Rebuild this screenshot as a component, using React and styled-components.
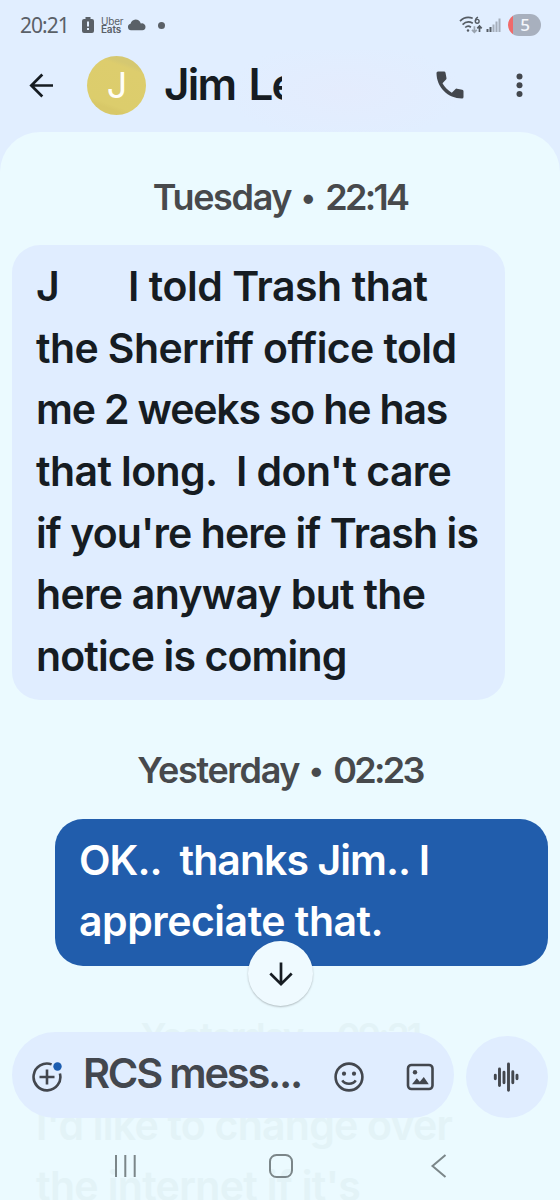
import React from "react";
import styled, { createGlobalStyle } from "styled-components";

const GlobalStyle = createGlobalStyle`
    * {
        box-sizing: border-box;
    }
    body {
        margin: 0;
        background: #ebfaff;
    }
    svg {
        display: block;
        flex: 0 0 auto;
    }
`

const Phone = styled.div`
    width: 560px;
    height: 1200px;
    position: relative;
    overflow: hidden;
    display: flex;
    flex-direction: column;
    background: #e1eeff;
    font-family: Inter, "Liberation Sans", sans-serif;
    color: #161c22;
`

const StatusBar = styled.div`
    height: 50px;
    padding: 0 19px 0 20px;
    display: flex;
    align-items: center;
    color: #5a6067;
`
const Clock = styled.div`
    width: 61px;
    font-family: "Noto Sans", sans-serif;
    font-size: 21px;
    line-height: 48px;
    letter-spacing: -1px;
    padding-bottom: 1px;
`
const UberEats = styled.div`
    width: 26px;
    margin-left: 6px;
    font-size: 10px;
    line-height: 8.5px;
    letter-spacing: -0.2px;
`
const Eats = styled.div`
    font-weight: 600;
`
const Dot = styled.div`
    width: 7px;
    height: 7px;
    margin-left: 12px;
    border-radius: 50%;
    background: #5a6067;
`
const StatusRight = styled.div`
    margin-left: auto;
    display: flex;
    align-items: center;
    gap: 2px;
`
const Battery = styled.div`
    width: 33px;
    height: 22px;
    margin-left: 5px;
    border-radius: 11px;
    background: linear-gradient(to right, #f06a6a 5.5px, #a8b0be 5.5px);
    color: #f4f7fc;
    font-family: "Noto Sans", sans-serif;
    font-size: 17px;
    font-weight: 500;
    line-height: 21px;
    text-align: center;
    padding-left: 1px;
`

const Header = styled.div`
    height: 82px;
    padding: 0 24px 12px 25px;
    display: flex;
    align-items: center;
    background: radial-gradient(ellipse 120px 50px at 345px 42px, #e4ecfd, rgba(225, 238, 255, 0));
`
const Avatar = styled.div`
    width: 59px;
    height: 59px;
    margin-left: 30px;
    border-radius: 50%;
    background: linear-gradient(200deg, #d5c871 18%, #ddcd6d 24%, #dccd6c 76%, #d8c868 82%);
    color: #fffef8;
    font-size: 36px;
    line-height: 58px;
    text-align: center;
    padding-left: 1px;
`
const Name = styled.div`
    width: 118px;
    margin-left: 18px;
    padding-bottom: 2px;
    overflow: hidden;
    white-space: nowrap;
    font-size: 44px;
    font-weight: 600;
    line-height: 68px;
    letter-spacing: -1.7px;
    word-spacing: 3.5px;
`
const HeaderActions = styled.div`
    margin-left: auto;
    display: flex;
    align-items: center;
    gap: 36.5px;
`

const Chat = styled.div`
    flex: 1;
    overflow: hidden;
    display: flex;
    flex-direction: column;
    background: #ebfaff;
    border-radius: 40px 40px 0 0;
`
const DateRow = styled.div`
    flex: 0 0 auto;
    height: ${(props) => props.$height}px;
    padding-top: ${(props) => props.$top}px;
    display: flex;
    align-items: center;
    justify-content: center;
    font-size: 36px;
    font-weight: 600;
    color: ${(props) => (props.$faded ? "#e3f3f7" : "#47494c")};
`
const Day = styled.span`
    letter-spacing: -1.35px;
`
const Bullet = styled.span`
    width: 34px;
    text-align: center;
    font-size: 30px;
`
const Time = styled.span`
    letter-spacing: -2.7px;
`
const Bubble = styled.div`
    flex: 0 0 auto;
    width: 493px;
    margin: 0 12px;
    padding: 11px 0 12.5px 24px;
    border-radius: 28px;
    align-self: ${(props) => (props.$sent ? "flex-end" : "flex-start")};
    background: ${(props) => (props.$faded ? "transparent" : props.$sent ? "#215dac" : "#e0edff")};
    color: ${(props) => (props.$faded ? "#e3f3f7" : props.$sent ? "#ffffff" : "#161c22")};
`
const Line = styled.div`
    display: flex;
    white-space: pre;
    font-size: 41px;
    font-weight: 600;
    line-height: 61.67px;
    letter-spacing: ${(props) => props.$spacing}px;
`
const Hidden = styled.span`
    width: 92px;
`

const ScrollDown = styled.button`
    position: absolute;
    left: 248px;
    top: 941px;
    width: 65px;
    height: 65px;
    padding: 0;
    border: none;
    border-radius: 50%;
    display: flex;
    align-items: center;
    justify-content: center;
    background: #effaff;
    color: #161c22;
    box-shadow: 0 1px 2px rgba(0, 0, 0, 0.25);
`

const Footer = styled.div`
    position: absolute;
    left: 0;
    right: 0;
    bottom: 0;
    height: 168px;
    display: flex;
    flex-direction: column;
`
const Composer = styled.div`
    height: 86px;
    padding: 0 12px;
    display: flex;
    align-items: flex-end;
    justify-content: space-between;
    color: #43474e;
`
const InputPill = styled.div`
    width: 442px;
    height: 86px;
    padding: 4px 18.5px 0 19px;
    border-radius: 43px;
    display: flex;
    align-items: center;
    background: #e0edff;
`
const Placeholder = styled.div`
    width: 270px;
    padding: 0 0 8px 20px;
    white-space: nowrap;
    font-size: 41.5px;
    font-weight: 600;
    line-height: 60px;
    letter-spacing: -2.2px;
`
const VoiceButton = styled.div`
    width: 82px;
    height: 82px;
    border-radius: 50%;
    display: flex;
    align-items: center;
    justify-content: center;
    background: #e0edff;
`
const NavBar = styled.div`
    flex: 1;
    padding: 14px 109px 0 111px;
    display: flex;
    align-items: center;
    justify-content: space-between;
    color: #7b8689;
`

const received = [
    { text: "the Sherriff office told", spacing: -0.6 },
    { text: "me 2 weeks so he has", spacing: -1.17 },
    { text: "that long.  I don't care", spacing: -0.6 },
    { text: "if you're here if Trash is", spacing: -0.9 },
    { text: "here anyway but the", spacing: -0.69 },
    { text: "notice is coming", spacing: -0.88 },
]
const sent = [
    { text: "OK..  thanks Jim.. I", spacing: -0.95 },
    { text: "appreciate that.", spacing: -0.48 },
]
const next = [
    { text: "I'd like to change over", spacing: -0.76 },
    { text: "the internet if it's", spacing: -0.65 },
]

function Lines({ data }) {
    return data.map((line) => (
        <Line key={line.text} $spacing={line.spacing}>{line.text}</Line>
    ))
}

function DateLabel({ day, time, height, top, faded }) {
    return (
        <DateRow $height={height} $top={top} $faded={faded}>
            <Day>{day}</Day>
            <Bullet>•</Bullet>
            <Time>{time}</Time>
        </DateRow>
    )
}

export default function App() {
    return (
        <Phone>
            <GlobalStyle />

            <StatusBar>
                <Clock>20:21</Clock>
                <svg width="14" height="18" viewBox="0 0 14 18">
                    <path fill="currentColor" d="M4.500 1h5v2H11a2 2 0 0 1 2 2v10a2 2 0 0 1-2 2H3a2 2 0 0 1-2-2V5a2 2 0 0 1 2-2h1.500z" />
                    <path stroke="#e1eeff" strokeWidth="2" d="M7 5.400v5M7 12v2" />
                </svg>
                <UberEats>
                    Uber
                    <Eats>Eats</Eats>
                </UberEats>
                <svg width="19" height="12" viewBox="0 0 19 12">
                    <path fill="currentColor" d="M4 11.200a3.300 3.300 0 0 1-.5-6.500A6 6 0 0 1 8.500.6 6 6 0 0 1 13.800 4.600a3.400 3.400 0 0 1 4.700 3.200 3.300 3.300 0 0 1-3.200 3.400z" />
                </svg>
                <Dot />
                <StatusRight>
                    <svg width="24" height="18" viewBox="0 0 24 18" fill="none" stroke="#555c64" strokeWidth="1.700">
                        <path d="M1 5.200C4.400 1.700 9.500.8 13.700 2.300M3.600 8.600c2.600-2.600 6.700-3.300 10.200-1.400M6.200 11.500c1.500-1.400 4-1.600 5.700-.3" />
                        <circle cx="9" cy="14.500" r="1.200" fill="#555c64" stroke="none" />
                        <path strokeWidth="1.400" d="M19 1.200c-1.600.6-2.600 2-2.600 4" />
                        <circle cx="18.200" cy="5.300" r="1.900" strokeWidth="1.400" />
                        <path stroke="#9aa4b0" d="M15.400 10.200v6M13 13.800l2.400 2.500 2.400-2.500" />
                        <path d="M20.500 16v-5.500M18.300 12.400l2.200-2.300 2.200 2.300" />
                    </svg>
                    <svg width="16" height="16" viewBox="0 0 16 16" strokeWidth="2" fill="none">
                        <path stroke="#555c64" d="M2.500 12v3M5.500 10v5" />
                        <path stroke="#a5aebb" d="M8.500 7.500v7.500M11.500 4.500v10.500M14.500 1.500v13.500" />
                    </svg>
                    <Battery>5</Battery>
                </StatusRight>
            </StatusBar>

            <Header>
                <svg width="32" height="32" viewBox="0 0 32 32" fill="none" stroke="#161c22" strokeWidth="2.700">
                    <path d="M28 16.500H7M17.300 5.500L6.300 16.500l11 11" />
                </svg>
                <Avatar>J</Avatar>
                <Name>Jim Le</Name>
                <HeaderActions>
                    <svg width="36" height="36" viewBox="0 0 24 24" fill="#43474d">
                        <path d="M3 4a1 1 0 0 1 1-1h4a1 1 0 0 1 1 .8l.65 3.500a1.200 1.200 0 0 1-.3 1.100L7 10.900a16 16 0 0 0 2.600 3.500 16 16 0 0 0 3.600 2.700l2.350-2.350a1.200 1.200 0 0 1 1.100-.32l3.500.7a1 1 0 0 1 .85 1V20a1 1 0 0 1-1 1C10.600 21 3 13.400 3 4z" />
                    </svg>
                    <svg width="32" height="32" viewBox="0 0 32 32" fill="#43474d">
                        <circle cx="15.500" cy="7.500" r="3" />
                        <circle cx="15.500" cy="16.300" r="3" />
                        <circle cx="15.500" cy="25.100" r="3" />
                    </svg>
                </HeaderActions>
            </Header>

            <Chat>
                <DateLabel day="Tuesday" time="22:14" height={113} top={16} />
                <Bubble>
                    <Line $spacing={-0.45}>
                        <Hidden>J</Hidden>
                        I told Trash that
                    </Line>
                    <Lines data={received} />
                </Bubble>
                <DateLabel day="Yesterday" time="02:23" height={118.5} top={22} />
                <Bubble $sent>
                    <Lines data={sent} />
                </Bubble>
                <DateLabel day="Yesterday" time="09:21" height={118} top={22} faded />
                <Bubble $faded>
                    <Lines data={next} />
                </Bubble>
            </Chat>

            <ScrollDown>
                <svg width="32" height="32" viewBox="0 0 32 32" fill="none" stroke="currentColor" strokeWidth="2.700">
                    <path d="M16 4.500v21M5.300 15.500L16 26.200l10.700-10.700" />
                </svg>
            </ScrollDown>

            <Footer>
                <Composer>
                    <InputPill>
                        <svg width="32" height="32" viewBox="0 0 32 32" fill="none" stroke="currentColor" strokeWidth="2.600">
                            <path d="M20.600 3.400A13.400 13.400 0 1 0 28.900 12.500M16 8.500v15M8.500 16h15" />
                            <circle cx="26.500" cy="5.500" r="4.200" fill="#1c5db0" stroke="none" />
                        </svg>
                        <Placeholder>RCS mess...</Placeholder>
                        <svg width="32" height="32" viewBox="0 0 32 32" fill="none" stroke="currentColor" strokeWidth="2.600">
                            <circle cx="16" cy="16" r="13.400" />
                            <path d="M9.300 19.300c2.600 4.600 10.800 4.600 13.400 0" />
                            <circle cx="11" cy="12.700" r="2.100" fill="currentColor" stroke="none" />
                            <circle cx="21" cy="12.700" r="2.100" fill="currentColor" stroke="none" />
                        </svg>
                        <svg width="32" height="32" viewBox="0 0 32 32" style={{ marginLeft: "auto" }}>
                            <rect x="4" y="4" width="24.500" height="24" rx="3.500" fill="none" stroke="currentColor" strokeWidth="2.600" />
                            <circle cx="11" cy="11.200" r="2.200" fill="currentColor" />
                            <path fill="currentColor" d="M8 23.300l4.800-6 3 3.400 4-4.600 5 7.200z" />
                        </svg>
                    </InputPill>
                    <VoiceButton>
                        <svg width="32" height="32" viewBox="0 0 32 32" stroke="currentColor" strokeWidth="2.900" strokeLinecap="round">
                            <path d="M4.300 14.300v3.400M8.500 8v16.500M13 11.300v10.500M17.500 3v26.300M21.800 10.800v11M26 14.300v3.400" />
                        </svg>
                    </VoiceButton>
                </Composer>
                <NavBar>
                    <svg width="28" height="24" viewBox="0 0 28 24" fill="none" stroke="currentColor" strokeWidth="2">
                        <path d="M5 1v22M14.300 1v22M23.700 1v22" />
                    </svg>
                    <svg width="28" height="24" viewBox="0 0 28 24" fill="none" stroke="currentColor" strokeWidth="2">
                        <rect x="3" y="1" width="22" height="22" rx="6.500" />
                    </svg>
                    <svg width="28" height="24" viewBox="0 0 28 24" fill="none" stroke="currentColor" strokeWidth="2">
                        <path d="M22.500 1L9.500 12l13 11" />
                    </svg>
                </NavBar>
            </Footer>
        </Phone>
    )
}
